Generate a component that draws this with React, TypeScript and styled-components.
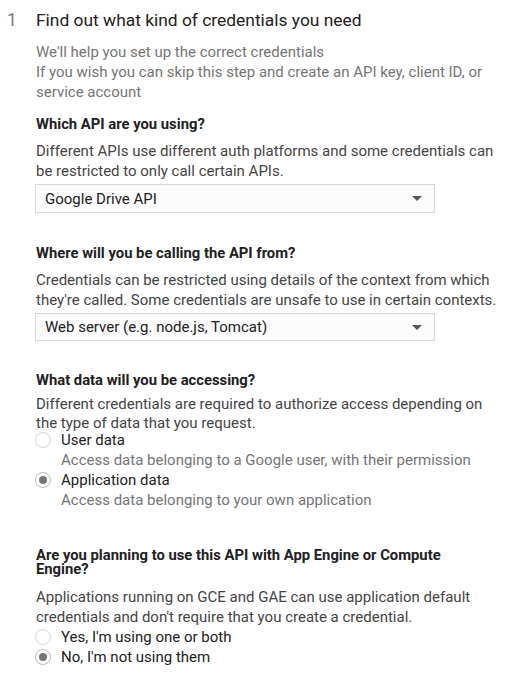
import React from "react";
import styled, { createGlobalStyle } from "styled-components";

const Global = createGlobalStyle`
  html, body { margin: 0; padding: 0; background: #ffffff; }
  body { font-family: Roboto, "Noto Sans", Arial, sans-serif; -webkit-font-smoothing: antialiased; }
`;

const Page = styled.div`
  width: 515px;
  padding-top: 8px;
  box-sizing: border-box;
`;

const StepHeader = styled.div`
  display: flex;
  align-items: baseline;
`;

const StepNumber = styled.div`
  width: 36px;
  box-sizing: border-box;
  padding-left: 7px;
  font-size: 17.5px;
  line-height: 24px;
  color: #757575;
`;

const StepTitle = styled.h1`
  margin: 0;
  font-size: 17.4px;
  line-height: 24px;
  font-weight: 400;
  color: #212121;
`;

const Content = styled.div`
  margin-left: 36px;
  width: 464px;
  display: flex;
  flex-direction: column;
`;

const Intro = styled.p`
  margin: 10px 0 0;
  font-size: 15px;
  line-height: 20px;
  color: #757575;
`;

const Section = styled.section<{ $top: number }>`
  margin-top: ${(p) => p.$top}px;
  display: flex;
  flex-direction: column;
`;

const Heading = styled.h2`
  margin: 0;
  max-width: 450px;
  font-size: 14.8px;
  line-height: 14px;
  font-weight: 700;
  color: #212121;
`;

const Desc = styled.p<{ $top?: number; $lh?: number }>`
  margin: ${(p) => p.$top ?? 10}px 0 0;
  font-size: 15px;
  line-height: ${(p) => p.$lh ?? 20}px;
  color: #444444;
`;

const SelectBox = styled.div<{ $h: number }>`
  margin: 3px 0 0 -1px;
  width: 400px;
  height: ${(p) => p.$h}px;
  box-sizing: border-box;
  border: 1px solid #d6d6d6;
  background: #fcfcfc;
  display: flex;
  align-items: center;
  justify-content: space-between;
  padding: 0 12px 0 9px;
  font-size: 15px;
  color: #212121;
`;

const Arrow = styled.span`
  width: 0;
  height: 0;
  border-left: 5px solid transparent;
  border-right: 5px solid transparent;
  border-top: 5px solid #555555;
`;

const RadioGroup = styled.div<{ $top: number }>`
  margin: ${(p) => p.$top}px 0 0 -1px;
  display: flex;
  flex-direction: column;
`;

const RadioRow = styled.div`
  display: flex;
  align-items: center;
  gap: 10px;
  height: 20px;
  font-size: 15px;
  color: #212121;
`;

const RadioCircle = styled.span<{ $checked?: boolean }>`
  width: 16px;
  height: 16px;
  box-sizing: border-box;
  border-radius: 50%;
  border: 1px solid ${(p) => (p.$checked ? "#bdbdbd" : "#d4d4d4")};
  background: #ffffff;
  display: flex;
  align-items: center;
  justify-content: center;
  flex: none;
  &::after {
    content: "";
    display: ${(p) => (p.$checked ? "block" : "none")};
    width: 8px;
    height: 8px;
    border-radius: 50%;
    background: #757575;
  }
`;

const RadioHint = styled.div`
  padding-left: 26px;
  font-size: 15px;
  line-height: 20px;
  color: #757575;
`;

type Opt = { label: string; hint?: string; checked?: boolean };

const Radios: React.FC<{ options: Opt[]; top: number }> = ({ options, top }) => (
  <RadioGroup $top={top}>
    {options.map((o) => (
      <React.Fragment key={o.label}>
        <RadioRow>
          <RadioCircle $checked={o.checked} />
          <span>{o.label}</span>
        </RadioRow>
        {o.hint && <RadioHint>{o.hint}</RadioHint>}
      </React.Fragment>
    ))}
  </RadioGroup>
);

export default function App() {
  return (
    <>
      <Global />
      <Page>
        <StepHeader>
          <StepNumber>1</StepNumber>
          <StepTitle>Find out what kind of credentials you need</StepTitle>
        </StepHeader>
        <Content>
          <Intro>
            We'll help you set up the correct credentials
            <br />
            If you wish you can skip this step and create an API key, client ID, or service account
          </Intro>

          <Section $top={15}>
            <Heading>Which API are you using?</Heading>
            <Desc>
              Different APIs use different auth platforms and some credentials can be restricted to only call certain APIs.
            </Desc>
            <SelectBox $h={29}>
              <span>Google Drive API</span>
              <Arrow />
            </SelectBox>
          </Section>

          <Section $top={33}>
            <Heading>Where will you be calling the API from?</Heading>
            <Desc>
              Credentials can be restricted using details of the context from which they're called. Some credentials are unsafe to use in certain contexts.
            </Desc>
            <SelectBox $h={28}>
              <span>Web server (e.g. node.js, Tomcat)</span>
              <Arrow />
            </SelectBox>
          </Section>

          <Section $top={32}>
            <Heading>What data will you be accessing?</Heading>
            <Desc $top={8} $lh={19}>
              Different credentials are required to authorize access depending on the type of data that you request.
            </Desc>
            <Radios
              top={-3}
              options={[
                { label: "User data", hint: "Access data belonging to a Google user, with their permission" },
                { label: "Application data", hint: "Access data belonging to your own application", checked: true },
              ]}
            />
          </Section>

          <Section $top={38}>
            <Heading>Are you planning to use this API with App Engine or Compute Engine?</Heading>
            <Desc $top={11}>
              Applications running on GCE and GAE can use application default credentials and don't require that you create a credential.
            </Desc>
            <Radios
              top={0}
              options={[
                { label: "Yes, I'm using one or both" },
                { label: "No, I'm not using them", checked: true },
              ]}
            />
          </Section>
        </Content>
      </Page>
    </>
  );
}
